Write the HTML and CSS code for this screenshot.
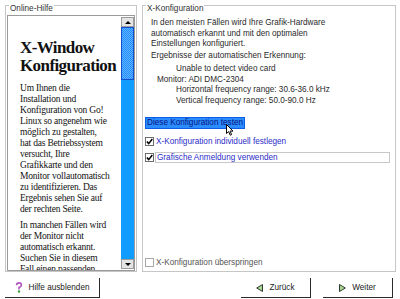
FILE: index.html
```html
<!DOCTYPE html>
<html lang="de">
  <head>
    <meta charset="UTF-8">
    <title>X-Konfiguration</title>
    <link rel="stylesheet" href="styles.css">
  </head>
  <body>

    <div class="main">
      <!-- Online help -->
      <section class="group help">
        <span class="group-title">Online-Hilfe</span>
        <div class="help-box">
          <div class="help-text">
            <h1>X-Window<br>Konfiguration</h1>
            <p>Um Ihnen die<br>Installation und<br>Konfiguration von Go!<br>Linux so angenehm wie<br>möglich zu gestalten,<br>hat das Betriebssystem<br>versucht, Ihre<br>Grafikkarte und den<br>Monitor vollautomatisch<br>zu identifizieren. Das<br>Ergebnis sehen Sie auf<br>der rechten Seite.</p>
            <p>In manchen Fällen wird<br>der Monitor nicht<br>automatisch erkannt.<br>Suchen Sie in diesem<br>Fall einen passenden</p>
          </div>
          <div class="scrollbar">
            <div class="sb-btn"><span class="tri-up"></span></div>
            <div class="sb-thumb"></div>
            <div class="sb-track"></div>
            <div class="sb-btn"><span class="tri-down"></span></div>
          </div>
        </div>
      </section>

      <!-- X configuration -->
      <section class="group config">
        <span class="group-title">X-Konfiguration</span>
        <p class="intro">In den meisten Fällen wird Ihre Grafik-Hardware<br>automatisch erkannt und mit den optimalen<br>Einstellungen konfiguriert.</p>
        <p class="intro">Ergebnisse der automatischen Erkennung:</p>
        <div class="detect">
          <div class="row">Unable to detect video card</div>
          <div class="row monitor">Monitor: ADI DMC-2304</div>
          <div class="row">Horizontal frequency range: 30.6-36.0 kHz</div>
          <div class="row">Vertical frequency range: 50.0-90.0 Hz</div>
        </div>

        <div class="test-btn">
          Diese Konfiguration testen
          <svg class="cursor" width="8" height="12" viewBox="0 0 8 12">
            <path d="M0.5 0.5 L0.5 9.5 L2.6 7.6 L4.2 11.2 L5.6 10.6 L4.1 7.1 L7 7.1 Z" fill="#fff" stroke="#000" stroke-width="1"/>
          </svg>
        </div>

        <label class="check on">
          <span class="box"><svg width="7" height="7" viewBox="0 0 7 7"><path d="M0.8 3.4 L2.7 5.6 L6.3 1" stroke="#000" stroke-width="1.5" fill="none"/></svg></span>
          <span class="lbl">X-Konfiguration individuell festlegen</span>
        </label>
        <label class="check on">
          <span class="box"><svg width="7" height="7" viewBox="0 0 7 7"><path d="M0.8 3.4 L2.7 5.6 L6.3 1" stroke="#000" stroke-width="1.5" fill="none"/></svg></span>
          <span class="lbl focus">Grafische Anmeldung verwenden</span>
        </label>

        <div class="spacer"></div>

        <label class="check">
          <span class="box"></span>
          <span class="lbl">X-Konfiguration überspringen</span>
        </label>
      </section>
    </div>

    <footer class="footer">
      <div class="btn hilfe">
        <svg width="8" height="11" viewBox="0 0 8 11">
          <path d="M1.6 3.2 Q1.6 0.9 4 0.9 Q6.4 0.9 6.4 3 Q6.4 4.6 4 5.4 L4 7.4" fill="none" stroke="#b055c0" stroke-width="1.6"/>
          <circle cx="4" cy="9.5" r="1.2" fill="#3fa040"/>
        </svg>
        Hilfe ausblenden
      </div>
      <div class="nav">
        <div class="btn">
          <svg width="7" height="8" viewBox="0 0 7 8"><path d="M6.5 0.5 L0.7 4 L6.5 7.5 Z" fill="#a8d890" stroke="#2e3a2e" stroke-width="1"/></svg>
          Zurück
        </div>
        <div class="btn">
          <svg width="7" height="8" viewBox="0 0 7 8"><path d="M0.5 0.5 L6.3 4 L0.5 7.5 Z" fill="#a8d890" stroke="#2e3a2e" stroke-width="1"/></svg>
          Weiter
        </div>
      </div>
    </footer>

  </body>
</html>
```

FILE: styles.css
```css
/* Base */
* {
  box-sizing: border-box;
}

body {
  margin: 0;
  width: 400px;
  height: 299px;
  overflow: hidden;
  background: #fff;
  font-family: 'Liberation Sans', Arial, sans-serif;
  font-size: 8.2px;
  color: #2a2a2a;
}

/* Layout */
.main {
  display: flex;
  gap: 5px;
  height: 272px;
  padding: 5px 4px 0 5px;
}

.group {
  position: relative;
  border: 1px solid #c6c6c6;
}

.group-title {
  position: absolute;
  top: -2px;
  left: 3px;
  padding: 0 1px;
  background: #fff;
  line-height: 10px;
  color: #333;
}

/* Online help */
.help {
  width: 132px;
  padding: 9px 1px 0 1px;
}

.help-box {
  display: flex;
  height: 100%;
  border: 1px solid #9a9a9a;
  overflow: hidden;
}

.help-text {
  flex: 1;
  padding: 23px 0 0 12px;
  font-family: 'Liberation Serif', 'Times New Roman', serif;
  color: #111;
  white-space: nowrap;
}

.help-text h1 {
  margin: 0 0 8px;
  font-size: 17px;
  line-height: 18px;
  letter-spacing: -0.6px;
}

.help-text p {
  margin: 0 0 5px;
  font-size: 9.5px;
  line-height: 11px;
  letter-spacing: -0.2px;
}

.scrollbar {
  display: flex;
  flex-direction: column;
  width: 13px;
  margin: 1px 0;
}

.sb-btn {
  display: flex;
  align-items: center;
  justify-content: center;
  height: 10px;
  background: #e4e4e4;
  border: 1px solid #9c9c9c;
}

.tri-up, .tri-down {
  width: 0;
  height: 0;
  border-left: 3px solid transparent;
  border-right: 3px solid transparent;
}

.tri-up {
  border-bottom: 3px solid #000;
}

.tri-down {
  border-top: 3px solid #000;
}

.sb-thumb {
  height: 53px;
  border: 1px solid #1050d0;
  background: repeating-conic-gradient(#62b4ff 0 25%, #1f8cff 0 50%) 0 0 / 2px 2px;
}

.sb-track {
  flex: 1;
  background: #119dff;
}

/* X configuration */
.config {
  flex: 1;
  display: flex;
  flex-direction: column;
  padding: 12px 5px 4px 1px;
}

.intro {
  margin: 0 0 1.5px;
  padding-left: 7px;
  line-height: 10.5px;
}

.detect {
  margin-top: 1px;
  padding-left: 7px;
  line-height: 10.5px;
}

.detect .row {
  padding-left: 25px;
}

.detect .monitor {
  padding-left: 6px;
}

.test-btn {
  position: relative;
  align-self: flex-start;
  margin: 11px 0 0 1px;
  height: 12px;
  padding: 0 1px;
  background: #2b8cff;
  border: 1px solid #0c5ee8;
  color: #08157e;
  line-height: 10px;
  white-space: nowrap;
}

.cursor {
  position: absolute;
  left: 80px;
  top: 6px;
}

.check {
  display: flex;
  align-items: center;
  gap: 2px;
  height: 10px;
  margin-left: 1px;
  color: #555;
  white-space: nowrap;
}

.check.on {
  margin-top: 7px;
  color: #2c2cc8;
}

.check.on + .check.on {
  margin-top: 6px;
}

.box {
  display: flex;
  align-items: center;
  justify-content: center;
  width: 9px;
  height: 9px;
  border: 1px solid #6d6d6d;
  background: #fff;
}

.check:not(.on) .box {
  border-color: #a8a8a8;
}

.lbl.focus {
  flex: 1;
  height: 11px;
  margin-left: -1px;
  padding: 0 1px;
  border: 1px solid #c8c8c8;
  line-height: 9px;
}

.spacer {
  flex: 1;
}

/* Footer buttons */
.footer {
  display: flex;
  align-items: center;
  height: 20px;
  margin-top: 6px;
  padding: 0 7px 0 5px;
}

.btn {
  display: flex;
  align-items: center;
  justify-content: center;
  gap: 6px;
  width: 70px;
  height: 20px;
  border-right: 1px solid #2b2b2b;
  border-bottom: 1px solid #2b2b2b;
  color: #222;
}

.hilfe {
  width: 95px;
}

.nav {
  display: flex;
  gap: 12px;
  margin-left: auto;
}
```
